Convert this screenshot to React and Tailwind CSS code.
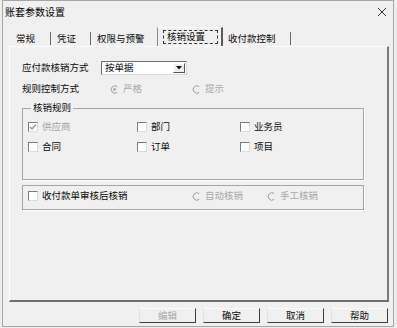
import React from 'react';

function Check({ label, checked, disabled }) {
  return (
    <div className="flex items-center h-[12px]">
      <span className="w-[10px] h-[10px] flex items-center justify-center border border-t-[#7c7c7c] border-l-[#7c7c7c] border-r-[#dcdcdc] border-b-[#dcdcdc] bg-white">
        {checked && (
          <svg width="8" height="8" viewBox="0 0 8 8">
            <path d="M1 4 L3 6 L7 1.5" fill="none" stroke="#9a9a9a" strokeWidth="1.4" />
          </svg>
        )}
      </span>
      <span className={disabled ? 'ml-[4px] text-[#a3a3a3]' : 'ml-[4px] text-[#0a0a0a]'}>{label}</span>
    </div>
  );
}

function Radio({ label, selected }) {
  return (
    <div className="flex items-center h-[12px]">
      <svg width="9" height="9" viewBox="0 0 9 9">
        <path d="M7.2 1.6 A3.7 3.7 0 1 0 7.2 7.4" fill="none" stroke="#9c9c9c" strokeWidth="1" />
        {selected && <circle cx="4.5" cy="4.5" r="1.4" fill="#a8a8a8" />}
      </svg>
      <span className="ml-[4px] text-[#a8a8a8]">{label}</span>
    </div>
  );
}

function Btn({ children, disabled }) {
  return (
    <div
      className={`w-[57px] h-[15px] flex items-center justify-center border border-t-[#fbfbfb] border-l-[#e2e2e2] border-r-[#3c3c3c] border-b-[#3c3c3c] ${
        disabled ? 'text-[#a8a8a8]' : 'text-[#0a0a0a]'
      }`}
    >
      {children}
    </div>
  );
}

export default function App() {
  return (
    <div className="w-[397px] h-[328px] bg-[#eeeeee] font-['Noto_Sans_CJK_SC',sans-serif] text-[9.5px] leading-none text-[#0a0a0a]">
      <div className="ml-[2px] w-[392px] h-[327px] border border-[#a6a6a6] bg-[#f0f0f0] flex flex-col">
        {/* title bar */}
        <div className="h-[21px] flex items-center justify-between pl-[2px] pr-[6px]">
          <span className="text-[10px] text-[#000]">账套参数设置</span>
          <svg width="10" height="10" viewBox="0 0 10 10">
            <path d="M1 1 L9 9 M9 1 L1 9" stroke="#333" strokeWidth="1" />
          </svg>
        </div>

        {/* tabs */}
        <div className="h-[24px] flex items-end pl-[13px]">
          <div className="w-[35px] h-[13px] mb-[1px] flex items-center border-r border-r-[#6a6a6a]">常规</div>
          <div className="w-[40px] h-[13px] mb-[1px] pl-[6px] flex items-center border-r border-r-[#6a6a6a]">凭证</div>
          <div className="w-[66px] h-[13px] mb-[1px] pl-[6px] flex items-center">权限与预警</div>
          <div className="w-[66px] h-[19px] border-l border-t border-l-[#8a8a8a] border-t-[#fcfcfc] border-r-2 border-r-[#5a5a5a] flex items-start pt-[2px] pl-[5px]">
            <div className="w-[55px] h-[14px] border border-dashed border-[#333] flex items-center pl-[3px]">核销设置</div>
          </div>
          <div className="w-[68px] h-[13px] mb-[1px] pl-[5px] flex items-center border-r border-r-[#6a6a6a]">收付款控制</div>
        </div>

        {/* panel */}
        <div className="ml-[6px] w-[380px] h-[256px] border-t border-l border-t-[#fdfdfd] border-l-[#fdfdfd] border-r-2 border-b-2 border-r-[#7a7a7a] border-b-[#6e6e6e] flex flex-col">
          <div className="mt-[14px] h-[14px] flex items-center pl-[12px]">
            <span className="w-[79px]">应付款核销方式</span>
            <div className="w-[86px] h-[14px] bg-white border border-t-[#6e6e6e] border-l-[#6e6e6e] border-r-[#dadada] border-b-[#dadada] flex items-center justify-between pl-[3px] pr-[1px]">
              <span>按单据</span>
              <div className="w-[12px] h-[10px] bg-[#f0f0f0] border border-t-[#fff] border-l-[#fff] border-r-[#555] border-b-[#555] flex items-center justify-center">
                <svg width="6" height="4" viewBox="0 0 6 4">
                  <path d="M0 0 L6 0 L3 3.5 Z" fill="#111" />
                </svg>
              </div>
            </div>
          </div>

          <div className="mt-[7px] h-[14px] flex items-center pl-[12px]">
            <span className="w-[88px]">规则控制方式</span>
            <div className="w-[82px]">
              <Radio label="严格" selected />
            </div>
            <Radio label="提示" />
          </div>

          <div className="relative mt-[12px] ml-[12px] w-[342px] h-[72px] border border-[#a6a6a6] shadow-[1px_1px_0_#ffffff] pl-[5px]">
            <span className="absolute left-[8px] top-[-6px] px-[2px] bg-[#f0f0f0]">核销规则</span>
            <div className="mt-[12px] flex">
              <div className="w-[109px]"><Check label="供应商" checked disabled /></div>
              <div className="w-[103px]"><Check label="部门" /></div>
              <Check label="业务员" />
            </div>
            <div className="mt-[8px] flex">
              <div className="w-[109px]"><Check label="合同" /></div>
              <div className="w-[103px]"><Check label="订单" /></div>
              <Check label="项目" />
            </div>
          </div>

          <div className="mt-[5px] ml-[12px] w-[342px] h-[25px] border border-[#a6a6a6] shadow-[1px_1px_0_#ffffff] pl-[5px]">
            <div className="mt-[4px] flex">
              <div className="w-[164px]"><Check label="收付款单审核后核销" /></div>
              <div className="w-[75px]"><Radio label="自动核销" /></div>
              <Radio label="手工核销" />
            </div>
          </div>
        </div>

        {/* buttons */}
        <div className="mt-[6px] flex justify-end gap-[7px] pr-[5px]">
          <Btn disabled>编辑</Btn>
          <Btn>确定</Btn>
          <Btn>取消</Btn>
          <Btn>帮助</Btn>
        </div>
      </div>
    </div>
  );
}
